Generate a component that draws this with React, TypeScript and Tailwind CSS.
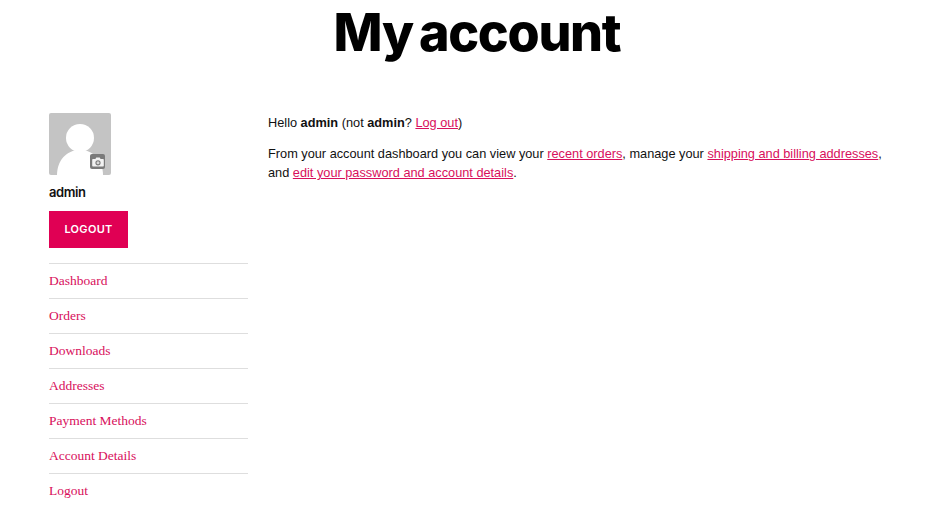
import React from 'react';

const navItems = ['Dashboard', 'Orders', 'Downloads', 'Addresses', 'Payment Methods', 'Account Details', 'Logout'];

const linkClass = 'text-[#d80f5c] underline';

const Avatar = () => (
  <div className="relative h-[62px] w-[62px] overflow-hidden rounded-[2px] bg-[#c4c4c4]">
    <svg viewBox="0 0 62 62" className="h-full w-full">
      <circle cx="31" cy="25" r="14" fill="#fff" />
      <path d="M8 62c0-14 9-25 23-25s23 11 23 25z" fill="#fff" />
    </svg>
    <div className="absolute left-[41px] top-[41px] flex h-[15px] w-[15px] items-center justify-center rounded-[2px] bg-[#7a7a7a]">
      <svg viewBox="0 0 12 10" className="h-[10px] w-[12px]">
        <path
          fillRule="evenodd"
          d="M1 2h2.4L4.3.6h3.4L8.6 2H11a.8.8 0 0 1 .8.8v6a.8.8 0 0 1-.8.8H1a.8.8 0 0 1-.8-.8v-6A.8.8 0 0 1 1 2zm5 1.2a2.6 2.6 0 1 0 0 5.2 2.6 2.6 0 0 0 0-5.2z"
          fill="#f2f2f2"
        />
        <circle cx="6" cy="5.8" r="1.5" fill="#d8d8d8" />
      </svg>
    </div>
  </div>
);

export default function App() {
  return (
    <div className="h-[517px] overflow-hidden bg-white font-['Liberation_Sans',sans-serif] text-[#111]">
      <h1 className="h-[113px] pl-[4px] pt-[3px] text-center font-['Inter',sans-serif] text-[52px] font-[850] leading-[60px] tracking-[-1.3px] [word-spacing:-4px] text-black">
        My account
      </h1>

      <div className="flex pl-[49px] pr-[60px]">
        <aside className="w-[199px] shrink-0">
          <Avatar />
          <div className="mt-[8px] font-['Inter',sans-serif] text-[13px] font-semibold leading-[18px] tracking-[-0.4px]">
            admin
          </div>
          <button className="mt-[10px] h-[37px] w-[79px] bg-[#e00054] font-['Inter',sans-serif] text-[11px] font-semibold tracking-[0.3px] text-white">
            LOGOUT
          </button>
          <ul className="mt-[15px] font-['Liberation_Serif',serif] text-[13.5px] leading-[34px] text-[#d80f5c]">
            {navItems.map(item => (
              <li key={item} className="border-t border-[#dedede]">
                {item}
              </li>
            ))}
          </ul>
        </aside>

        <main className="ml-[20px] flex-1 text-[12.76px] leading-[19px]">
          <p>
            Hello <strong>admin</strong> (not <strong>admin</strong>? <a className={linkClass}>Log out</a>)
          </p>
          <p className="mt-[12px]">
            From your account dashboard you can view your <a className={linkClass}>recent orders</a>, manage your{' '}
            <a className={linkClass}>shipping and billing addresses</a>, and{' '}
            <a className={linkClass}>edit your password and account details</a>.
          </p>
        </main>
      </div>
    </div>
  );
}
